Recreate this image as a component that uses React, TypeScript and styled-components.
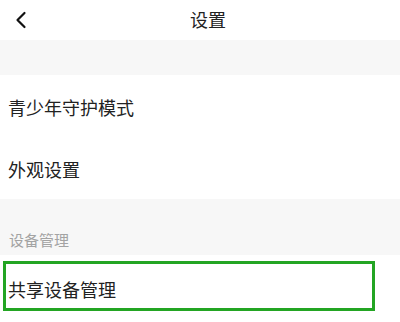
import styled, { createGlobalStyle } from 'styled-components';

const GlobalStyle = createGlobalStyle`
	html, body {
		margin: 0;
		padding: 0;
		background: #fff;
	}
	body {
		font-family: "Noto Sans CJK SC", "Noto Sans", sans-serif;
		color: #222;
	}
`;

const Page = styled.div`
	width: 400px;
	height: 322px;
	overflow: hidden;
	display: flex;
	flex-direction: column;
	background: #fff;
`;

const Header = styled.div`
	height: 40px;
	flex-shrink: 0;
	display: grid;
	grid-template-columns: 60px 1fr 60px;
	align-items: center;
`;

const BackButton = styled.div`
	display: flex;
	align-items: center;
	padding-left: 14px;
	height: 100%;
`;

const Title = styled.div`
	text-align: center;
	font-size: 18px;
	line-height: 20px;
	color: #222;
	padding: 0 0 2px 16px;
`;

const Band = styled.div<{ $h: number }>`
	height: ${(p) => p.$h}px;
	flex-shrink: 0;
	background: #f7f7f7;
	display: flex;
	align-items: flex-end;
	box-sizing: border-box;
	padding: 0 0 6px 9px;
`;

const SectionLabel = styled.div`
	font-size: 15px;
	line-height: 18px;
	color: #a3a3a3;
`;

const Row = styled.div<{ $h: number }>`
	position: relative;
	height: ${(p) => p.$h}px;
	flex-shrink: 0;
	display: flex;
	align-items: center;
	padding-left: 8px;
	font-size: 18px;
	color: #222;
`;

const RowText = styled.span`
	line-height: 20px;
	padding-top: 1px;
`;

const Highlight = styled.div`
	position: absolute;
	left: 3px;
	top: 6px;
	width: 372px;
	height: 50px;
	box-sizing: border-box;
	border: 3px solid #23a523;
	pointer-events: none;
`;

function ChevronLeft() {
	return (
		<svg width="14" height="18" viewBox="0 0 14 18">
			<path d="M10.5 2 L3.5 9 L10.5 16" fill="none" stroke="#111" strokeWidth="2.2" strokeLinecap="round" strokeLinejoin="round" />
		</svg>
	);
}

export default function App() {
	return (
		<Page>
			<GlobalStyle />
			<Header>
				<BackButton>
					<ChevronLeft />
				</BackButton>
				<Title>设置</Title>
				<div />
			</Header>
			<Band $h={35} />
			<Row $h={62}>
				<RowText>青少年守护模式</RowText>
			</Row>
			<Row $h={62}>
				<RowText>外观设置</RowText>
			</Row>
			<Band $h={56}>
				<SectionLabel>设备管理</SectionLabel>
			</Band>
			<Row $h={67}>
				<RowText>共享设备管理</RowText>
				<Highlight />
			</Row>
		</Page>
	);
}
